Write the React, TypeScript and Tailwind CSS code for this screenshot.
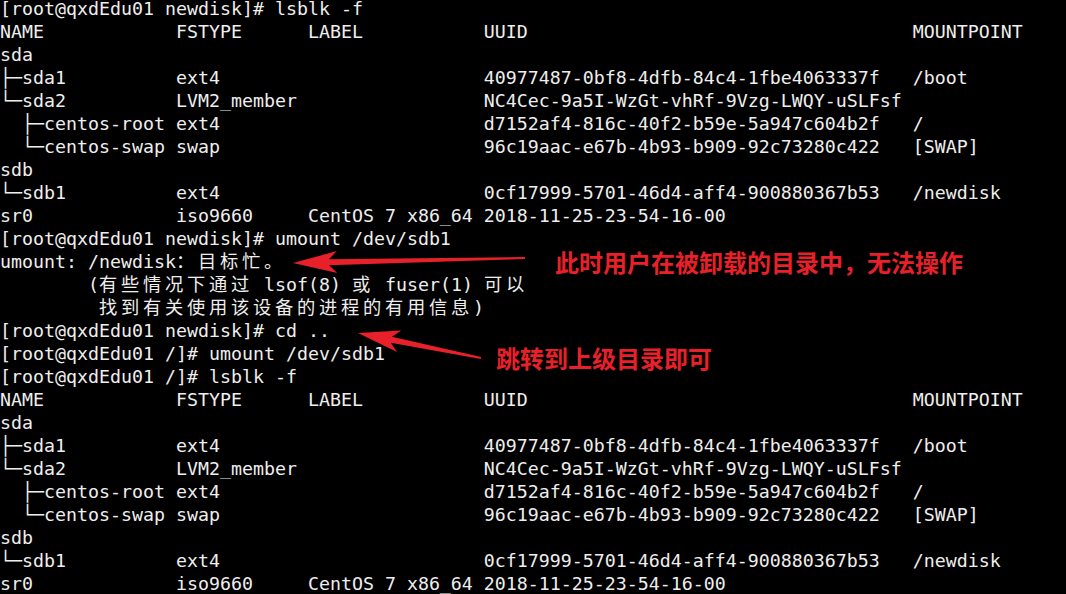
const lsblk = [
  'NAME            FSTYPE      LABEL           UUID                                   MOUNTPOINT',
  'sda',
  '├─sda1          ext4                        40977487-0bf8-4dfb-84c4-1fbe4063337f   /boot',
  '└─sda2          LVM2_member                 NC4Cec-9a5I-WzGt-vhRf-9Vzg-LWQY-uSLFsf',
  '  ├─centos-root ext4                        d7152af4-816c-40f2-b59e-5a947c604b2f   /',
  '  └─centos-swap swap                        96c19aac-e67b-4b93-b909-92c73280c422   [SWAP]',
  'sdb',
  '└─sdb1          ext4                        0cf17999-5701-46d4-aff4-900880367b53   /newdisk',
  'sr0             iso9660     CentOS 7 x86_64 2018-11-25-23-54-16-00',
];

const lines = [
  '[root@qxdEdu01 newdisk]# lsblk -f',
  ...lsblk,
  '[root@qxdEdu01 newdisk]# umount /dev/sdb1',
  'umount: /newdisk：目标忙。',
  '        (有些情况下通过 lsof(8) 或 fuser(1) 可以',
  '         找到有关使用该设备的进程的有用信息)',
  '[root@qxdEdu01 newdisk]# cd ..',
  '[root@qxdEdu01 /]# umount /dev/sdb1',
  '[root@qxdEdu01 /]# lsblk -f',
  ...lsblk,
];

const isWide = (ch: string) => ch.charCodeAt(0) >= 0x2e80;

// CJK characters take two terminal cells
function TermLine({ text }: { text: string }) {
  const parts: { s: string; wide: boolean }[] = [];
  for (const ch of text) {
    const wide = isWide(ch);
    const last = parts[parts.length - 1];
    if (!wide && last && !last.wide) last.s += ch;
    else parts.push({ s: ch, wide });
  }
  return (
    <div className="h-[23px] whitespace-pre">
      {parts.map((p, i) =>
        p.wide ? (
          <span key={i} className="inline-block w-[22px]">
            {p.s}
          </span>
        ) : (
          <span key={i}>{p.s}</span>
        ),
      )}
    </div>
  );
}

type Pt = [number, number];

function arrowPoints(tail: Pt, tip: Pt, headLen = 44, headHalf = 11, tailW = 1, neckW = 3) {
  const dx = tip[0] - tail[0];
  const dy = tip[1] - tail[1];
  const len = Math.hypot(dx, dy);
  const ux = dx / len;
  const uy = dy / len;
  const nx = -uy;
  const ny = ux;
  const bx = tip[0] - ux * headLen;
  const by = tip[1] - uy * headLen;
  const nkx = bx + ux * 8;
  const nky = by + uy * 8;
  const pts: Pt[] = [
    [tail[0] + nx * tailW, tail[1] + ny * tailW],
    [nkx + nx * neckW, nky + ny * neckW],
    [bx + nx * headHalf, by + ny * headHalf],
    tip,
    [bx - nx * headHalf, by - ny * headHalf],
    [nkx - nx * neckW, nky - ny * neckW],
    [tail[0] - nx * tailW, tail[1] - ny * tailW],
  ];
  return pts.map((p) => `${p[0].toFixed(1)},${p[1].toFixed(1)}`).join(' ');
}

export default function App() {
  return (
    <div className="relative h-[594px] w-[1066px] overflow-hidden bg-black">
      {/* Terminal output */}
      <div className="-mt-[3px] font-['DejaVu_Sans_Mono','Noto_Sans_CJK_SC',monospace] text-[18.27px] leading-[23px] text-[#eeeeee]">
        {lines.map((l, i) => (
          <TermLine key={i} text={l} />
        ))}
      </div>

      {/* Annotations */}
      <svg className="pointer-events-none absolute inset-0" width={1066} height={594}>
        <polygon points={arrowPoints([525, 258], [293, 263])} fill="#e8202a" />
        <polygon points={arrowPoints([481, 358], [358, 333], 42, 11, 1, 3)} fill="#e8202a" />
      </svg>
      <div className="absolute left-[555px] top-[250px] font-['Noto_Sans_CJK_SC',sans-serif] text-[24px] font-bold leading-[24px] text-[#e8202a]">
        此时用户在被卸载的目录中，无法操作
      </div>
      <div className="absolute left-[496px] top-[346px] font-['Noto_Sans_CJK_SC',sans-serif] text-[24px] font-bold leading-[24px] text-[#e8202a]">
        跳转到上级目录即可
      </div>
    </div>
  );
}
